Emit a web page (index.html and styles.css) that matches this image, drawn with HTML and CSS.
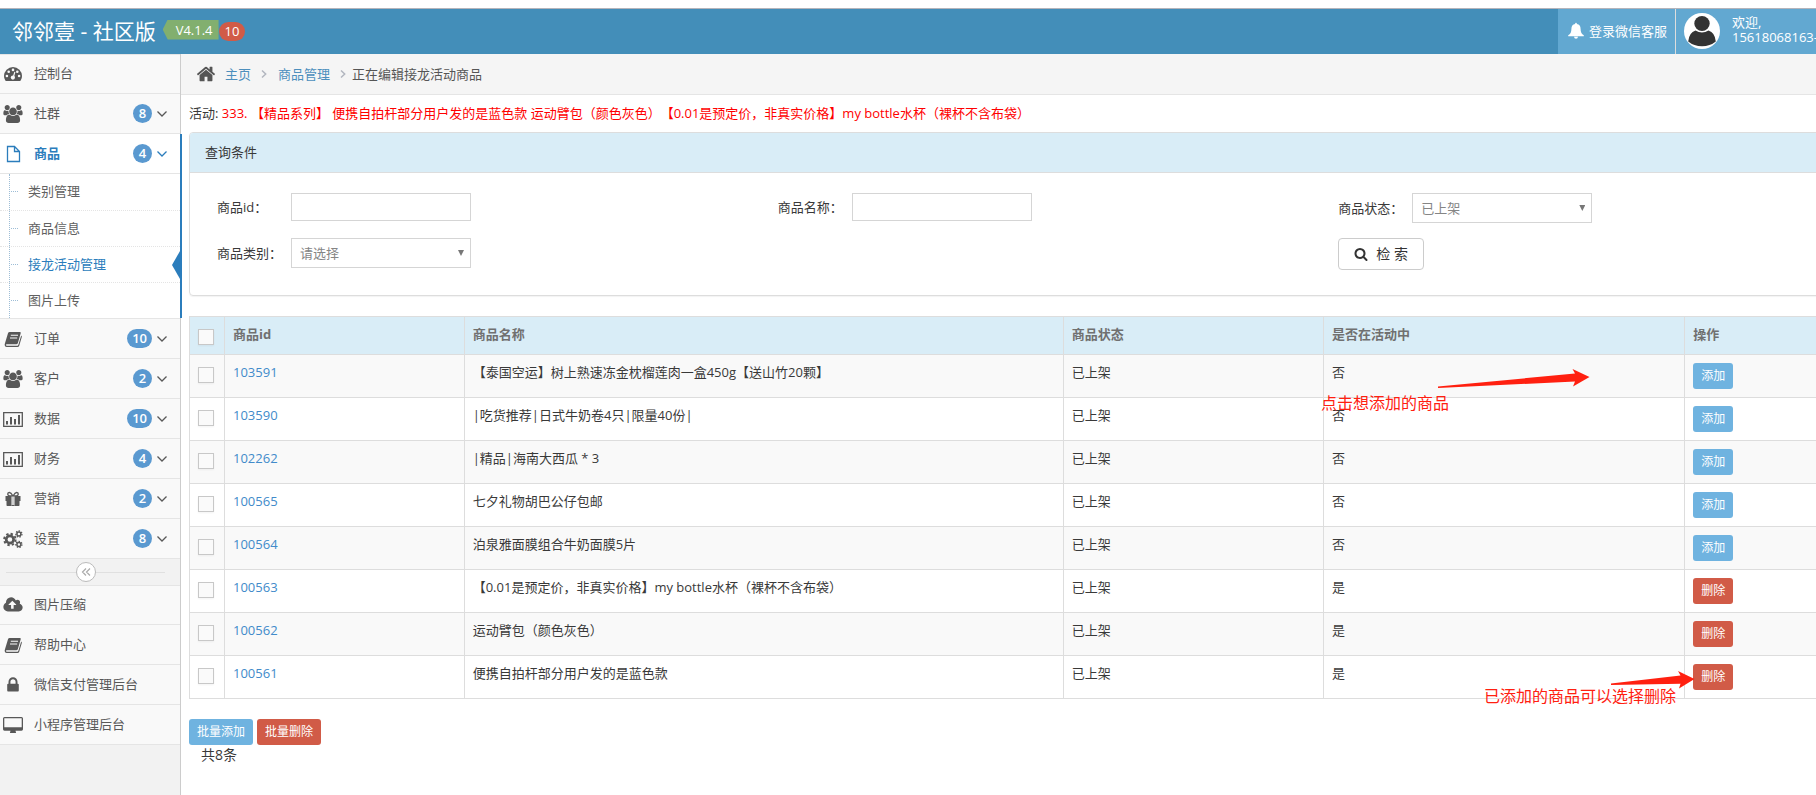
FILE: index.html
```html
<!DOCTYPE html>
<html lang="zh-CN">
<head>
<meta charset="utf-8">
<title>邻邻壹 - 社区版</title>
<link rel="stylesheet" href="styles.css">
</head>
<body>
<svg class="sprite" aria-hidden="true">
  <symbol id="i-home" viewBox="0 0 1792 1792"><path d="M1472 992v480q0 26-19 45t-45 19h-384v-384h-256v384h-384q-26 0-45-19t-19-45v-480q0-1 .5-3t.5-3l575-474 575 474q1 2 1 6zm223-69l-62 74q-8 9-21 11h-3q-13 0-21-7l-692-577-692 577q-12 8-24 7-13-2-21-11l-62-74q-8-10-7-23.5t11-21.5l719-599q32-26 76-26t76 26l244 204v-195q0-14 9-23t23-9h192q14 0 23 9t9 23v408l219 182q10 8 11 21.5t-7 23.5z"/></symbol>
  <symbol id="i-search" viewBox="0 0 1792 1792"><path d="M1216 832q0-185-131.5-316.5t-316.5-131.5-316.5 131.5-131.5 316.5 131.5 316.5 316.5 131.5 316.5-131.5 131.5-316.5zm512 832q0 52-38 90t-90 38q-54 0-90-38l-343-342q-179 124-399 124-143 0-273.5-55.5t-225-150-150-225-55.5-273.5 55.5-273.5 150-225 225-150 273.5-55.5 273.5 55.5 225 150 150 225 55.5 273.5q0 220-124 399l343 343q37 37 37 90z"/></symbol>
  <symbol id="i-lock" viewBox="0 0 1792 1792"><path d="M640 768h512v-192q0-106-75-181t-181-75-181 75-75 181v192zm832 96v576q0 40-28 68t-68 28h-960q-40 0-68-28t-28-68v-576q0-40 28-68t68-28h32v-192q0-184 132-316t316-132 316 132 132 316v192h32q40 0 68 28t28 68z"/></symbol>
  <symbol id="i-cloud" viewBox="-64 0 1920 1792"><path d="M1216 864q0-14-9-23l-352-352q-9-9-23-9t-23 9l-351 351q-10 12-10 24 0 14 9 23t23 9h224v352q0 13 9.5 22.5t22.5 9.5h192q13 0 22.5-9.5t9.5-22.5v-352h224q13 0 22.5-9.5t9.5-22.5zm640 288q0 159-112.5 271.5t-271.5 112.5h-1088q-185 0-316.5-131.5t-131.5-316.5q0-130 70-240t188-165q-2-30-2-43 0-212 150-362t362-150q156 0 285.5 87t188.5 231q71-62 166-62 106 0 181 75t75 181q0 76-41 138 130 31 213.5 135.5t83.5 238.5z"/></symbol>
  <symbol id="i-users" viewBox="0 0 1920 1792"><path d="M593 896q-162 5-265 128h-134q-82 0-138-40.5t-56-118.5q0-353 124-353 6 0 43.5 21t97.5 42.5 119 21.5q67 0 133-23-5 37-5 66 0 139 81 256zm1071 637q0 120-73 189.5t-194 69.5h-874q-121 0-194-69.5t-73-189.5q0-53 3.5-103.5t14-109 26.5-108.5 43-97.5 62-81 85.5-53.5 111.5-20q10 0 43 21.5t73 48 107 48 135 21.5 135-21.5 107-48 73-48 43-21.5q61 0 111.5 20t85.5 53.5 62 81 43 97.5 26.5 108.5 14 109 3.5 103.5zm-1024-1277q0 106-75 181t-181 75-181-75-75-181 75-181 181-75 181 75 75 181zm704 384q0 159-112.5 271.5t-271.5 112.5-271.5-112.5-112.5-271.5 112.5-271.5 271.5-112.5 271.5 112.5 112.5 271.5zm576 225q0 78-56 118.5t-138 40.5h-134q-103-123-265-128 81-117 81-256 0-29-5-66 66 23 133 23 59 0 119-21.5t97.5-42.5 43.5-21q124 0 124 353zm-128-609q0 106-75 181t-181 75-181-75-75-181 75-181 181-75 181 75 75 181z"/></symbol>
  <symbol id="i-file" viewBox="0 0 20 18"><path d="M4.500 1.500h7l5 5v10h-12zM11.500 1.500v5h5" fill="none" stroke="currentColor" stroke-width="1.300"/></symbol>
  <symbol id="i-dash" viewBox="0 0 20 18"><path d="M1 11a9 9 0 0 1 18 0q0 2.600-1.300 4.600-.3.400-.8.400H3.100q-.5 0-.8-.4Q1 13.600 1 11z"/><g fill="#f9f9f9"><circle cx="3.900" cy="11" r="1.300"/><circle cx="5.700" cy="6.700" r="1.300"/><circle cx="10" cy="4.900" r="1.300"/><circle cx="14.300" cy="6.700" r="1.300"/><circle cx="16.100" cy="11" r="1.300"/><circle cx="9.900" cy="12.600" r="2.100"/><path d="M11.300 6.800l1.100.3-1.500 5.500-1.300-.3z"/></g></symbol>
  <symbol id="i-book" viewBox="0 0 20 18"><path d="M6.600 2h10.200q1.300 0 .9 1.300L14.900 13q-.4 1.200-1.600 1.200H3.800q-1 0-.9.800.1.700 1.100.7h10.300q.8 0 1-.7l2.900-9.600q.9.500.6 1.500l-2.600 8.800q-.4 1.300-1.700 1.300H3.900Q2.200 17 1.800 15.500q-.3-1 .1-2L5 3.300Q5.400 2 6.600 2z"/><path d="M7.800 5.300h7.200M7 8h7.200" stroke="#f9f9f9" stroke-width="1.100"/></symbol>
  <symbol id="i-chart" viewBox="0 0 20 18"><path d="M.7 2.700h18.600v13.600H.7z" fill="none" stroke="currentColor" stroke-width="1.300"/><path d="M3 11h2v3.500H3zM7 7h2v7.500H7zM11 9h2v5.500h-2zM15 5h2v9.500h-2z"/></symbol>
  <symbol id="i-gift" viewBox="0 0 20 18"><path d="M2.500 6h6v5h-6zM11.500 6h6v5h-6zM3.500 11h5v5H4.300q-.8 0-.8-.8zM11.500 11h5v4.200q0 .8-.8.800h-4.200z"/><path d="M9 6h2v9.500H9z" opacity=".25"/><path d="M8.500 15h3v1h-3z"/><path d="M9.800 5.800Q8 2.300 6.300 2.500q-1.700.2-1.600 1.600.1 1.500 1.800 1.700zM10.200 5.800q1.800-3.500 3.500-3.300 1.700.2 1.600 1.600-.1 1.500-1.800 1.700z" fill="none" stroke="currentColor" stroke-width="1.300"/></symbol>
  <symbol id="i-cogs" viewBox="0 0 20 18"><g fill="none" stroke="currentColor"><circle cx="6.900" cy="9.500" r="3.700" stroke-width="2.700"/><circle cx="6.900" cy="9.500" r="5.700" stroke-width="2" stroke-dasharray="2.350 2.127"/><circle cx="15.900" cy="4" r="2" stroke-width="1.500"/><circle cx="15.900" cy="4" r="3.100" stroke-width="1.200" stroke-dasharray="1.450 1.332"/><circle cx="15.900" cy="14.400" r="2" stroke-width="1.500"/><circle cx="15.900" cy="14.400" r="3.100" stroke-width="1.200" stroke-dasharray="1.450 1.332"/></g></symbol>
  <symbol id="i-desktop" viewBox="0 0 20 18"><path d="M1.500 1h17Q20 1 20 2.500v10.800q0 1.400-1.500 1.400h-6l.6 2.300h-6.200l.6-2.300h-6Q0 14.700 0 13.300V2.500Q0 1 1.500 1zm-.2 1.300v8.900h17.400V2.300z" fill-rule="evenodd"/></symbol>
  <symbol id="i-bell" viewBox="0 0 16 18"><path d="M8 .8q.9 0 .9 1.100 3.700.7 3.700 5 0 4.600 3.200 6.400v.9H.2v-.9q3.200-1.800 3.200-6.400 0-4.300 3.700-5Q7.100.8 8 .8zM6 14.700h4q-.2 2-2 2t-2-2z"/></symbol>
  <symbol id="i-down" viewBox="0 0 10 10"><path d="M.5 2.500L5 7l4.500-4.500" fill="none" stroke="currentColor" stroke-width="1.300"/></symbol>
  <symbol id="i-right" viewBox="0 0 6 10"><path d="M1 1.500L4.700 5 1 8.500" fill="none" stroke="currentColor" stroke-width="1.500"/></symbol>
  <symbol id="i-fold" viewBox="0 0 10 10"><path d="M5 1.500L1.500 5 5 8.500M9 1.500L5.500 5 9 8.500" fill="none" stroke="currentColor" stroke-width="1.200"/></symbol>
</svg>

<div class="page">
  <header class="navbar">
    <a class="brand" href="#">邻邻壹 - 社区版</a>
    <span class="version">V4.1.4</span>
    <span class="badge badge-red">10</span>
    <nav class="user-nav" aria-label="用户">
      <a class="service" href="#"><svg class="bell"><use href="#i-bell"/></svg>登录微信客服</a>
      <a class="user" href="#">
        <svg class="avatar" viewBox="0 0 36 36"><circle cx="18" cy="18" r="18" fill="#fff"/><ellipse cx="18" cy="10.500" rx="7.700" ry="7.500" fill="#333"/><path d="M11.500 17.500Q18 21.500 24.500 17.500 31 19.500 31.800 28.500 26 33.300 18 33.300T4.200 28.500Q5 19.500 11.500 17.500z" fill="#333"/></svg>
        <span class="welcome"><span>欢迎,</span><span>15618068163-</span></span>
      </a>
    </nav>
  </header>

  <div class="body">
    <aside class="sidebar">
      <ul class="menu">
        <li><a href="#"><svg class="icon"><use href="#i-dash"/></svg><span class="label">控制台</span></a></li>
        <li><a href="#"><svg class="icon"><use href="#i-users"/></svg><span class="label">社群</span><span class="badge">8</span><svg class="arrow"><use href="#i-down"/></svg></a></li>
        <li class="open">
          <a href="#"><svg class="icon"><use href="#i-file"/></svg><span class="label">商品</span><span class="badge">4</span><svg class="arrow"><use href="#i-down"/></svg></a>
          <ul class="submenu">
            <li><a href="#">类别管理</a></li>
            <li><a href="#">商品信息</a></li>
            <li class="current"><a href="#">接龙活动管理</a></li>
            <li><a href="#">图片上传</a></li>
          </ul>
        </li>
        <li><a href="#"><svg class="icon"><use href="#i-book"/></svg><span class="label">订单</span><span class="badge">10</span><svg class="arrow"><use href="#i-down"/></svg></a></li>
        <li><a href="#"><svg class="icon"><use href="#i-users"/></svg><span class="label">客户</span><span class="badge">2</span><svg class="arrow"><use href="#i-down"/></svg></a></li>
        <li><a href="#"><svg class="icon"><use href="#i-chart"/></svg><span class="label">数据</span><span class="badge">10</span><svg class="arrow"><use href="#i-down"/></svg></a></li>
        <li><a href="#"><svg class="icon"><use href="#i-chart"/></svg><span class="label">财务</span><span class="badge">4</span><svg class="arrow"><use href="#i-down"/></svg></a></li>
        <li><a href="#"><svg class="icon"><use href="#i-gift"/></svg><span class="label">营销</span><span class="badge">2</span><svg class="arrow"><use href="#i-down"/></svg></a></li>
        <li><a href="#"><svg class="icon"><use href="#i-cogs"/></svg><span class="label">设置</span><span class="badge">8</span><svg class="arrow"><use href="#i-down"/></svg></a></li>
      </ul>
      <div class="collapse"><button type="button" aria-label="收起菜单"><svg><use href="#i-fold"/></svg></button></div>
      <ul class="menu">
        <li><a href="#"><svg class="icon"><use href="#i-cloud"/></svg><span class="label">图片压缩</span></a></li>
        <li><a href="#"><svg class="icon"><use href="#i-book"/></svg><span class="label">帮助中心</span></a></li>
        <li><a href="#"><svg class="icon"><use href="#i-lock"/></svg><span class="label">微信支付管理后台</span></a></li>
        <li><a href="#"><svg class="icon"><use href="#i-desktop"/></svg><span class="label">小程序管理后台</span></a></li>
      </ul>
    </aside>

    <main class="main">
      <nav class="crumbs" aria-label="位置">
        <svg class="home"><use href="#i-home"/></svg>
        <a href="#">主页</a>
        <svg class="sep"><use href="#i-right"/></svg>
        <a href="#">商品管理</a>
        <svg class="sep sep-last"><use href="#i-right"/></svg>
        <span>正在编辑接龙活动商品</span>
      </nav>

      <div class="content">
        <p class="activity">活动: <span>333. 【精品系列】 便携自拍杆部分用户发的是蓝色款 运动臂包（颜色灰色）【0.01是预定价，非真实价格】my bottle水杯（裸杯不含布袋）</span></p>

        <section class="panel">
          <h2>查询条件</h2>
          <form class="filters">
            <div class="field"><label for="pid">商品id：</label><input id="pid" type="text"></div>
            <div class="field"><label for="pname">商品名称：</label><input id="pname" type="text"></div>
            <div class="field"><label for="pstate">商品状态：</label><span class="select"><select id="pstate"><option>已上架</option></select></span></div>
            <div class="field"><label for="ptype">商品类别：</label><span class="select"><select id="ptype"><option>请选择</option></select></span></div>
            <div class="field field-last"><button class="search" type="button"><svg><use href="#i-search"/></svg>检 索</button></div>
          </form>
        </section>

        <div class="table-wrap">
          <table>
            <colgroup><col class="c-check"><col class="c-id"><col class="c-name"><col class="c-state"><col class="c-active"><col></colgroup>
            <thead>
              <tr><th><input type="checkbox" aria-label="全选"></th><th>商品id</th><th>商品名称</th><th>商品状态</th><th>是否在活动中</th><th>操作</th></tr>
            </thead>
            <tbody>
              <tr><td><input type="checkbox" aria-label="103591"></td><td><a href="#">103591</a></td><td>【泰国空运】树上熟速冻金枕榴莲肉一盒450g【送山竹20颗】</td><td>已上架</td><td>否</td><td><button class="btn add" type="button">添加</button></td></tr>
              <tr><td><input type="checkbox" aria-label="103590"></td><td><a href="#">103590</a></td><td>|吃货推荐|日式牛奶卷4只|限量40份|</td><td>已上架</td><td>否</td><td><button class="btn add" type="button">添加</button></td></tr>
              <tr><td><input type="checkbox" aria-label="102262"></td><td><a href="#">102262</a></td><td>|精品|海南大西瓜 * 3</td><td>已上架</td><td>否</td><td><button class="btn add" type="button">添加</button></td></tr>
              <tr><td><input type="checkbox" aria-label="100565"></td><td><a href="#">100565</a></td><td>七夕礼物胡巴公仔包邮</td><td>已上架</td><td>否</td><td><button class="btn add" type="button">添加</button></td></tr>
              <tr><td><input type="checkbox" aria-label="100564"></td><td><a href="#">100564</a></td><td>泊泉雅面膜组合牛奶面膜5片</td><td>已上架</td><td>否</td><td><button class="btn add" type="button">添加</button></td></tr>
              <tr><td><input type="checkbox" aria-label="100563"></td><td><a href="#">100563</a></td><td>【0.01是预定价，非真实价格】my bottle水杯（裸杯不含布袋）</td><td>已上架</td><td>是</td><td><button class="btn del" type="button">删除</button></td></tr>
              <tr><td><input type="checkbox" aria-label="100562"></td><td><a href="#">100562</a></td><td>运动臂包（颜色灰色）</td><td>已上架</td><td>是</td><td><button class="btn del" type="button">删除</button></td></tr>
              <tr><td><input type="checkbox" aria-label="100561"></td><td><a href="#">100561</a></td><td>便携自拍杆部分用户发的是蓝色款</td><td>已上架</td><td>是</td><td><button class="btn del" type="button">删除</button></td></tr>
            </tbody>
          </table>
          <span class="note note-add">点击想添加的商品</span>
          <svg class="pointer pointer-add" viewBox="0 0 152 18"><path d="M0 17.500L137 4.500 134.500 0 151.500 8 135 17.500 137 12.500 0 19z"/></svg>
          <span class="note note-del">已添加的商品可以选择删除</span>
          <svg class="pointer pointer-del" viewBox="0 0 84 18"><path d="M0 12.500L69.500 4.500 67 0 83.500 8 68 17.500 69.500 12.800 0 14z"/></svg>
        </div>

        <div class="bulk">
          <button class="btn add" type="button">批量添加</button>
          <button class="btn del" type="button">批量删除</button>
        </div>
        <p class="total">共8条</p>
      </div>
    </main>
  </div>
</div>
</body>
</html>
```
FILE: styles.css
```css
* { box-sizing: border-box; }

body {
  margin: 0;
  padding-top: 8px;
  overflow: hidden;
  background: #fff;
  color: #393939;
  font: 13px/20px "Open Sans", "Noto Sans CJK SC", sans-serif;
  text-spacing-trim: space-all;
}

a { color: #4c8fbd; text-decoration: none; }
ul { list-style: none; margin: 0; padding: 0; }
p, h2 { margin: 0; font: inherit; }
button, input, select { font: inherit; color: inherit; }
svg { fill: currentColor; flex: none; }
.sprite { position: absolute; width: 0; height: 0; }

/* The layout is a little wider than the window and runs off its right edge. */
.page {
  display: flex;
  flex-direction: column;
  width: calc(100% + 86px);
  min-height: calc(100vh - 8px);
}

/* Top bar */
.navbar {
  display: flex;
  align-items: center;
  height: 46px;
  padding-left: 12px;
  border-top: 1px solid #b4b4bb;
  background: #438eb9;
  color: #fff;
}
.brand { padding-bottom: 2px; color: #fff; font-size: 21px; line-height: 30px; }
.version {
  height: 20px;
  margin: 0 0 4px 7px;
  padding: 0 6px 0 13px;
  background: #82af6f;
  clip-path: polygon(5px 0, 100% 0, 100% 100%, 5px 100%, 0 50%);
}
.badge {
  min-width: 19px;
  height: 19px;
  padding: 0 5px;
  border-radius: 10px;
  background: #5a99d0;
  color: #fff;
  font-weight: 600;
  line-height: 18px;
  text-align: center;
}
.badge-red { padding: 0 6px; background: #d15b47; font-weight: 400; }
.user-nav { display: flex; align-self: stretch; margin-left: auto; }
.user-nav a { display: flex; align-items: center; padding-bottom: 1px; background: #62a8d1; color: #fff; }
.user-nav .service { gap: 5px; padding-left: 10px; padding-right: 8px; }
.bell { width: 16px; height: 18px; }
.user-nav .user { gap: 12px; width: 227px; padding-left: 8px; border-left: 1px solid #ddd; }
.avatar { width: 36px; height: 36px; }
.welcome { display: flex; flex-direction: column; padding-bottom: 2px; line-height: 15px; }

.body { display: flex; flex: 1; }

/* Sidebar */
.sidebar {
  flex: none;
  width: 181px;
  border-right: 1px solid #ccc;
  background: #f2f2f2;
}
.menu { border-top: 1px solid #e5e5e5; }
.menu > li { position: relative; border-bottom: 1px solid #e5e5e5; background: #f9f9f9; }
.menu > li > a {
  display: flex;
  align-items: center;
  height: 39px;
  padding: 0 13px 0 3px;
  color: #585858;
}
.menu > li:first-child > a { height: 38px; }
.icon { width: 20px; height: 18px; margin-right: 11px; }
.label { flex: 1; padding-bottom: 2px; }
.arrow { width: 10px; height: 10px; margin-left: 5px; }
.menu > .open { background: #fff; }
.menu > .open > a { color: #2b7dbc; font-weight: 700; }
.open::after {
  content: "";
  position: absolute;
  top: 0;
  right: -2px;
  bottom: 0;
  width: 2px;
  background: #2b7dbc;
}
.submenu { position: relative; border-top: 1px solid #e5e5e5; }
.submenu::before {
  content: "";
  position: absolute;
  top: 0;
  bottom: 0;
  left: 9px;
  border-left: 1px dotted #9dbdd6;
}
.submenu li { position: relative; height: 36px; }
.submenu li + li { border-top: 1px dotted #e4e4e4; }
.submenu li::before {
  content: "";
  position: absolute;
  top: 17px;
  left: 11px;
  width: 7px;
  border-top: 1px dotted #9dbdd6;
}
.submenu a { display: block; padding: 7px 0 8px 28px; color: #616161; }
.submenu .current a { color: #2b7dbc; }
.current::after {
  content: "";
  position: absolute;
  top: 4px;
  right: 0;
  width: 8px;
  height: 28px;
  background: #2b7dbc;
  clip-path: polygon(100% 0, 100% 100%, 0 50%);
}
.collapse { position: relative; display: flex; height: 26px; padding: 3px 0 0 76px; }
.collapse::before {
  content: "";
  position: absolute;
  top: 13px;
  left: 6px;
  right: 15px;
  border-top: 1px solid #e0e0e0;
}
.collapse button {
  position: relative;
  display: flex;
  align-items: center;
  justify-content: center;
  width: 20px;
  height: 20px;
  padding: 0;
  border: 1px solid #bbb;
  border-radius: 50%;
  background: #fff;
  color: #aaa;
}
.collapse svg { width: 10px; height: 10px; }

/* Main column */
.main { flex: 1; min-width: 0; }
.crumbs {
  display: flex;
  align-items: center;
  height: 41px;
  padding-left: 15px;
  border-bottom: 1px solid #e5e5e5;
  background: #f5f5f5;
  color: #555;
}
.home { width: 20px; height: 20px; margin-right: 9px; }
.sep { width: 6px; height: 10px; margin: 0 11px 0 10px; color: #b2b6bf; }
.sep-last { margin-right: 6px; }
.content { padding-left: 8px; }
.activity { padding: 8px 0 9px; white-space: nowrap; }
.activity span { color: #f00; }

.panel {
  border: 1px solid #ddd;
  border-radius: 4px;
  box-shadow: 0 1px 1px rgba(0, 0, 0, .05);
}
.panel h2 {
  padding: 9px 15px 10px;
  border-bottom: 1px solid #ddd;
  border-radius: 3px 3px 0 0;
  background: #d9edf7;
}
.filters {
  display: grid;
  grid-template-columns: repeat(3, 1fr);
  gap: 15px 0;
  padding: 20px 2px 25px 27px;
}
.field { display: flex; align-items: center; align-self: start; }
.field-last { grid-column: 3; }
.field label { width: 74px; }
.field input, .field select {
  width: 180px;
  height: 28px;
  padding: 0 8px;
  border: 1px solid #d5d5d5;
  border-radius: 0;
  background: #fff;
  color: #858585;
}
.field select { display: block; height: 30px; appearance: none; }
.select { position: relative; }
.select::after {
  content: "";
  position: absolute;
  top: 12px;
  right: 7px;
  width: 6px;
  height: 6px;
  background: #777;
  clip-path: polygon(0 0, 100% 0, 50% 100%);
}
.search {
  display: flex;
  align-items: center;
  gap: 8px;
  height: 32px;
  padding: 0 15px;
  border: 1px solid #ccc;
  border-radius: 4px;
  background: #fff;
  color: #333;
  font-size: 14px;
}
.search svg { width: 14px; height: 14px; }

/* Product table */
.table-wrap { position: relative; margin-top: 20px; }
table { width: 100%; table-layout: fixed; border-collapse: collapse; }
.c-check { width: 35px; }
.c-id { width: 14%; }
.c-name { width: 35%; }
.c-state { width: 15.2%; }
.c-active { width: 21.1%; }
th, td {
  padding: 7px 8px 8px;
  border: 1px solid #ddd;
  text-align: left;
  vertical-align: top;
}
th { height: 38px; background: #d9edf7; color: #707070; font-weight: 700; }
tbody tr:nth-child(odd) { background: #f9f9f9; }
td a { color: #428bca; }
th input, td input {
  display: block;
  appearance: none;
  width: 16px;
  height: 16px;
  margin: 5px 0 0;
  border: 1px solid #c8c8c8;
  background: #fafafa;
  box-shadow: 0 1px 2px rgba(0, 0, 0, .05);
}
.btn {
  display: block;
  height: 26px;
  padding: 0 8px;
  border: 0;
  border-radius: 3px;
  color: #fff;
  font-size: 12px;
  line-height: 26px;
}
td .btn { margin-top: 1px; }
.add { background: #6fb3e0; }
.del { background: #d15b47; }

/* Red hints lying over the table */
.note { position: absolute; color: #ff2010; font-size: 16px; line-height: 20px; white-space: nowrap; }
.note-add { top: 77px; left: 1132px; }
.note-del { top: 370px; left: 1295px; }
.pointer { position: absolute; height: 18px; fill: #ff2010; overflow: visible; }
.pointer-add { top: 53px; left: 1249px; width: 152px; }
.pointer-del { top: 355px; left: 1422px; width: 84px; }

.bulk { display: flex; gap: 4px; margin-top: 20px; }
.total { padding-left: 12px; font-size: 14px; }
```
